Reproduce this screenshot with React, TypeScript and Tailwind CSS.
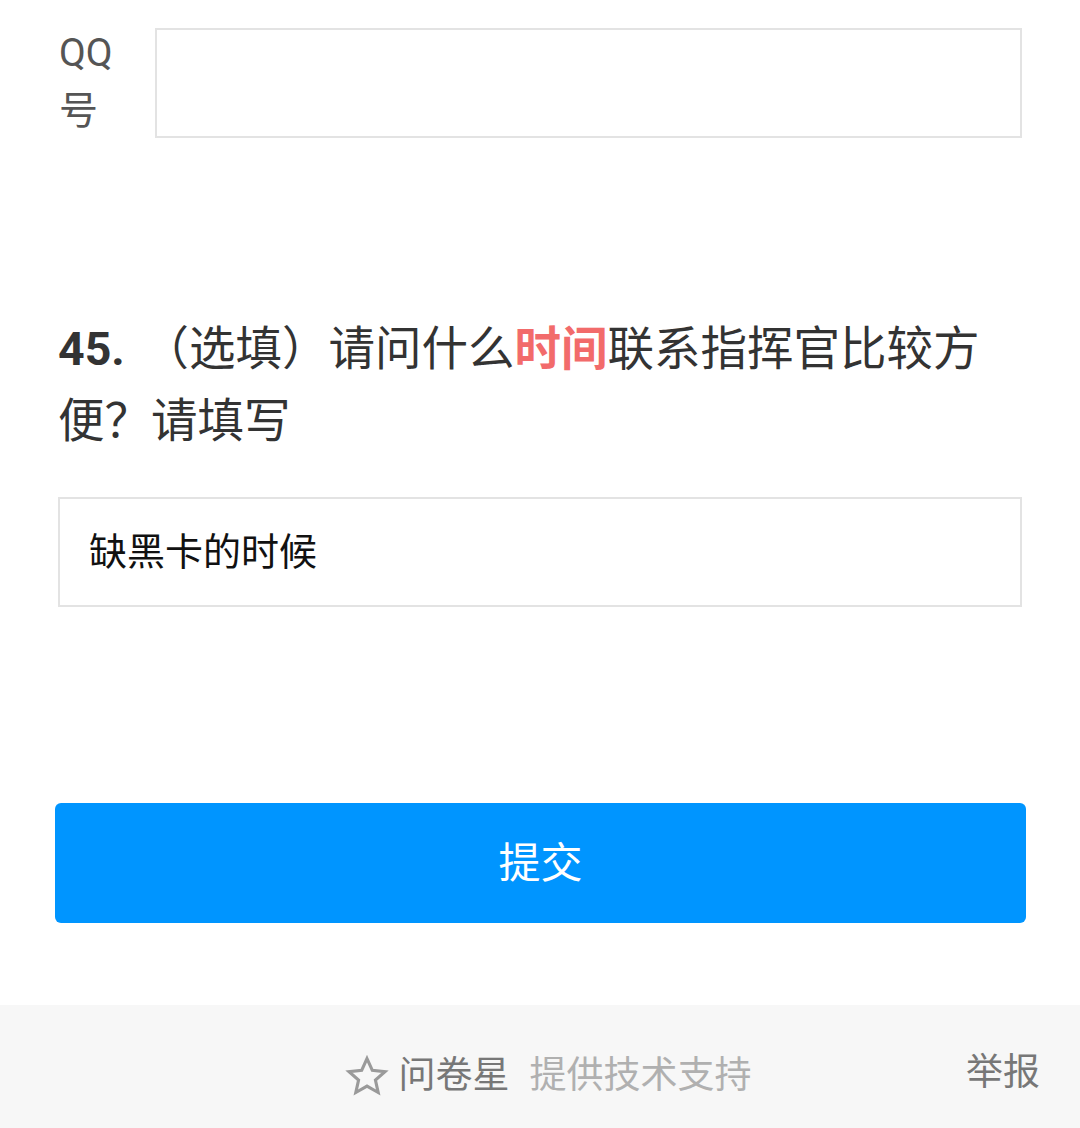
import React from "react";

const font = "Roboto, 'Noto Sans CJK SC', 'Noto Sans', sans-serif";

export default function App() {
  return (
    <div className="w-[1080px] h-[1128px] bg-white flex flex-col overflow-hidden" style={{ fontFamily: font }}>
      <div className="flex flex-col px-[58px] pt-[28px]">
        {/* QQ row */}
        <div className="flex items-start">
          <div className="w-[97px] shrink-0 text-[39px] leading-[58px] text-[#555] -mt-[4px] pl-[1px]">
            QQ
            <br />号
          </div>
          <div className="w-[867px] h-[110px] border-2 border-[#e3e3e3] bg-white" />
        </div>

        {/* Question */}
        <div className="mt-[173px] text-[46.5px] leading-[72px] text-[#333]">
          <span className="font-bold">45.</span>
          <span className="ml-[6px]"> （选填）请问什么</span>
          <span className="font-bold text-[#f26b6b]">时间</span>
          <span>联系指挥官比较方便？请填写</span>
        </div>

        <div className="mt-[40px] w-[964px] h-[110px] border-2 border-[#e3e3e3] flex items-center pl-[29px] text-[38px] text-[#111]">
          缺黑卡的时候
        </div>
      </div>

      <div className="px-[55px] mt-[196px]">
        <div className="w-[971px] h-[120px] rounded-[6px] bg-[#0095ff] flex items-center justify-center text-white text-[42px]">
          提交
        </div>
      </div>

      <div className="mt-[82px] flex-1 bg-[#f7f7f7] relative flex items-center justify-center">
        <div className="flex items-center ml-[16px] mt-[18px]">
          <svg width="44" height="44" viewBox="0 0 24 24" className="mr-[10px]">
            <path
              d="M12 2.5l2.9 6.4 6.9.7-5.2 4.6 1.5 6.8L12 17.5l-6.1 3.5 1.5-6.8-5.2-4.6 6.9-.7z"
              fill="none"
              stroke="#9a9a9a"
              strokeWidth="1.7"
              strokeLinejoin="miter"
            />
          </svg>
          <span className="text-[37px] text-[#777]">问卷星</span>
          <span className="text-[37px] text-[#b0b0b0] ml-[20px]">提供技术支持</span>
        </div>
        <span className="absolute right-[40px] top-1/2 -translate-y-1/2 mt-[6px] text-[37px] text-[#777]">举报</span>
      </div>
    </div>
  );
}
